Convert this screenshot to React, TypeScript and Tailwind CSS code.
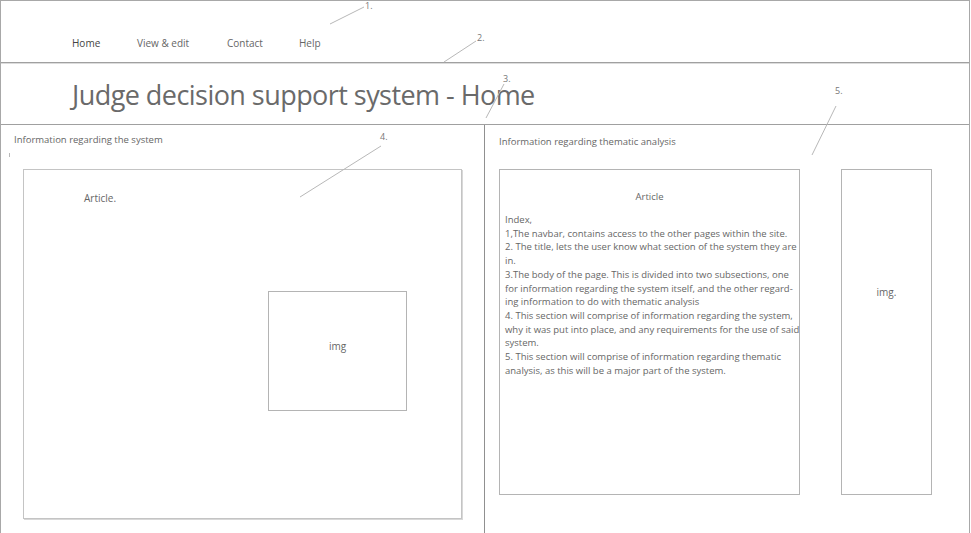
import React from "react";

const lines = [
  "Index,",
  "1,The navbar, contains access to the other pages within the site.",
  "2. The title, lets the user know what section of the system they are",
  "in.",
  "3.The body of the page. This is divided into two subsections, one",
  "for information regarding the system itself, and the other regard-",
  "ing information to do with thematic analysis",
  "4. This section will comprise of information regarding the system,",
  "why it was put into place, and any requirements for the use of said",
  "system.",
  "5. This section will comprise of information regarding thematic",
  "analysis, as this will be a major part of the system.",
];

export default function App() {
  return (
    <div
      className="relative w-[971px] h-[533px] overflow-hidden bg-white text-[#666]"
      style={{ fontFamily: '"Open Sans", "Noto Sans", sans-serif' }}
    >
      <div className="flex flex-col w-[970px] h-[533px] border-l border-r border-t border-[#a8a8a8]">
        {/* navbar */}
        <div className="h-[62px] shrink-0 border-b border-[#a0a0a0] flex items-start pt-[35px] pl-[71px] text-[10px]">
          <span className="text-[#444] font-medium w-[65px]">Home</span>
          <span className="w-[90px]">View &amp; edit</span>
          <span className="w-[72px]">Contact</span>
          <span>Help</span>
        </div>
        {/* title */}
        <div className="h-[62px] shrink-0 border-t border-[#dcdcdc] border-b border-b-[#a0a0a0] pl-[71px] pt-[12px]">
          <h1 className="text-[27px] leading-[38px] text-[#6a6a6a] font-normal tracking-[-0.55px]">
            Judge decision support system - Home
          </h1>
        </div>
        {/* body */}
        <div className="flex flex-1 min-h-0">
          <div className="w-[484px] shrink-0 border-r border-[#909090] pt-[8px] pl-[13px]">
            <div className="text-[9.5px] leading-[13px]">Information regarding the system</div>
            <div className="ml-[9px] mt-[23px] w-[439px] h-[350px] border border-[#c4c4c4] shadow-[1px_1px_0_#d8d8d8]">
              <div className="ml-[60px] mt-[21px] text-[10px] leading-[14px]">Article.</div>
              <div className="ml-[244px] mt-[86px] w-[139px] h-[120px] border border-[#b4b4b4] flex items-center justify-center text-[10px] pb-[10px]">
                img
              </div>
            </div>
          </div>
          <div className="flex-1 pt-[10px] pl-[14px]">
            <div className="text-[9.5px] leading-[14px]">Information regarding thematic analysis</div>
            <div className="flex mt-[20px]">
              <div className="w-[301px] h-[326px] border border-[#b4b4b4] pt-[20px] pl-[5px]">
                <div className="text-center text-[9.5px] leading-[14px] pr-[5px]">Article</div>
                <div className="mt-[9px] text-[9.5px] leading-[13.7px] whitespace-nowrap">
                  {lines.map((l, i) => (
                    <div key={i}>{l}</div>
                  ))}
                </div>
              </div>
              <div className="ml-[41px] w-[91px] h-[326px] border border-[#b4b4b4] pt-[115px] text-center text-[10px] leading-[14px]">
                img.
              </div>
            </div>
          </div>
        </div>
      </div>

      {/* annotations */}
      <svg className="absolute inset-0 pointer-events-none" width="971" height="533">
        <g stroke="#b8b8b8" strokeWidth="1" fill="none">
          <line x1="330" y1="24" x2="364" y2="7" />
          <line x1="444" y1="62" x2="476" y2="41" />
          <line x1="486" y1="118" x2="504" y2="84" />
          <line x1="300" y1="197" x2="381" y2="146" />
          <line x1="812" y1="155" x2="836" y2="106" />
          <line x1="9.5" y1="153" x2="9.5" y2="157" />
        </g>
      </svg>
      <span className="absolute left-[365px] top-[1px] text-[9px] leading-[9px] text-[#777]">1.</span>
      <span className="absolute left-[477px] top-[33px] text-[9px] leading-[9px] text-[#777]">2.</span>
      <span className="absolute left-[503px] top-[74px] text-[9px] leading-[9px] text-[#777]">3.</span>
      <span className="absolute left-[380px] top-[132px] text-[9px] leading-[9px] text-[#777]">4.</span>
      <span className="absolute left-[835px] top-[86px] text-[9px] leading-[9px] text-[#777]">5.</span>
    </div>
  );
}
